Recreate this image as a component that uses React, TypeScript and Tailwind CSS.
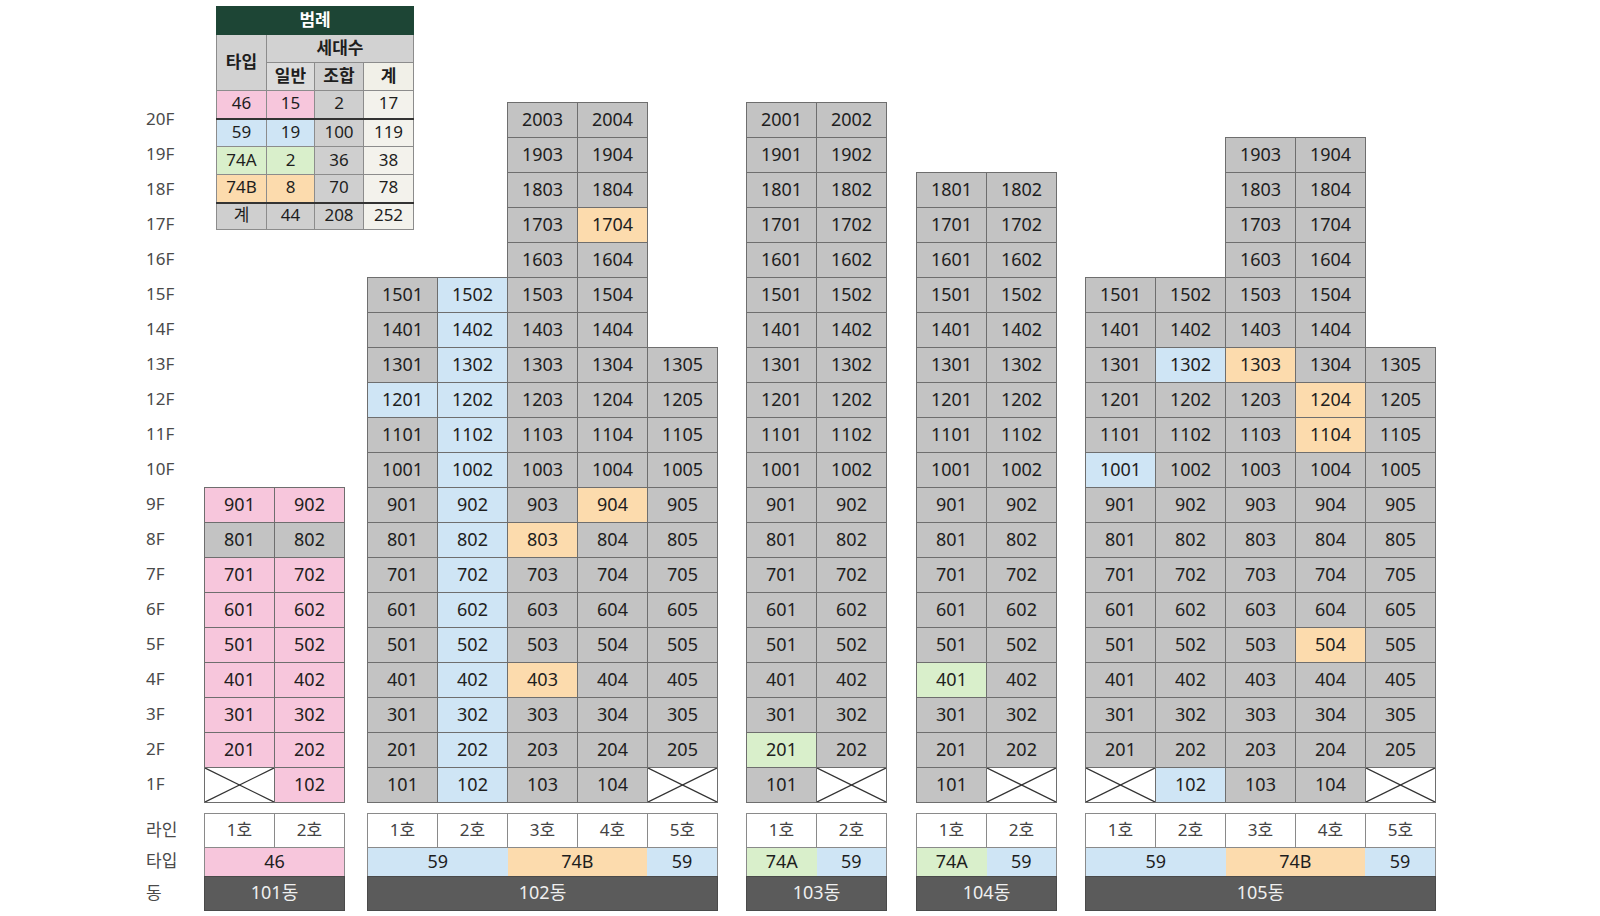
import React from 'react';

const tones = {
  gray: 'bg-[#c3c3c3]',
  pink: 'bg-[#f7c6dc]',
  blue: 'bg-[#cfe5f5]',
  green: 'bg-[#d9efcb]',
  orange: 'bg-[#fcdbad]',
};

type Tone = keyof typeof tones;

interface TypeSeg {
  label: string;
  span: 1 | 2;
  tone: Tone;
}

interface Building {
  name: string;
  tops: number[];
  base: Tone[];
  crossed: string[];
  marks: Record<string, Tone>;
  types: TypeSeg[];
  gap: string;
}

const buildings: Building[] = [
  {
    name: '101동',
    tops: [9, 9],
    base: ['pink', 'pink'],
    crossed: ['101'],
    marks: { '801': 'gray', '802': 'gray' },
    types: [{ label: '46', span: 2, tone: 'pink' }],
    gap: 'ml-0',
  },
  {
    name: '102동',
    tops: [15, 15, 20, 20, 13],
    base: ['gray', 'blue', 'gray', 'gray', 'gray'],
    crossed: ['105'],
    marks: { '1201': 'blue', '1704': 'orange', '904': 'orange', '803': 'orange', '403': 'orange' },
    types: [
      { label: '59', span: 2, tone: 'blue' },
      { label: '74B', span: 2, tone: 'orange' },
      { label: '59', span: 1, tone: 'blue' },
    ],
    gap: 'ml-[22px]',
  },
  {
    name: '103동',
    tops: [20, 20],
    base: ['gray', 'gray'],
    crossed: ['102'],
    marks: { '201': 'green' },
    types: [
      { label: '74A', span: 1, tone: 'green' },
      { label: '59', span: 1, tone: 'blue' },
    ],
    gap: 'ml-[28px]',
  },
  {
    name: '104동',
    tops: [18, 18],
    base: ['gray', 'gray'],
    crossed: ['102'],
    marks: { '401': 'green' },
    types: [
      { label: '74A', span: 1, tone: 'green' },
      { label: '59', span: 1, tone: 'blue' },
    ],
    gap: 'ml-[29px]',
  },
  {
    name: '105동',
    tops: [15, 15, 19, 19, 13],
    base: ['gray', 'gray', 'gray', 'gray', 'gray'],
    crossed: ['101', '105'],
    marks: {
      '1302': 'blue',
      '1303': 'orange',
      '1204': 'orange',
      '1104': 'orange',
      '1001': 'blue',
      '504': 'orange',
      '102': 'blue',
    },
    types: [
      { label: '59', span: 2, tone: 'blue' },
      { label: '74B', span: 2, tone: 'orange' },
      { label: '59', span: 1, tone: 'blue' },
    ],
    gap: 'ml-[28px]',
  },
];

const floors = Array.from({ length: 20 }, (_, i) => 20 - i);

const spanClass = { 1: 'flex-[1]', 2: 'flex-[2]' };

function Cross() {
  return (
    <svg className="block w-full h-full" viewBox="0 0 100 100" preserveAspectRatio="none">
      <line x1="0" y1="0" x2="100" y2="100" stroke="#333" strokeWidth="1.3" vectorEffect="non-scaling-stroke" />
      <line x1="0" y1="100" x2="100" y2="0" stroke="#333" strokeWidth="1.3" vectorEffect="non-scaling-stroke" />
    </svg>
  );
}

function Tower({ b }: { b: Building }) {
  return (
    <div className="flex items-end">
      {b.tops.map((top, i) => {
        const line = i + 1;
        const list = Array.from({ length: top }, (_, k) => top - k);
        return (
          <div key={line} className={`flex flex-col ${i > 0 ? '-ml-px' : ''}`}>
            {list.map((floor, k) => {
              const no = `${floor * 100 + line}`;
              const crossed = b.crossed.includes(no);
              const tone = b.marks[no] ?? b.base[i];
              return (
                <div
                  key={no}
                  className={`w-[71px] h-[36px] shrink-0 border border-[#6e6e6e] flex items-center justify-center text-[18px] leading-none text-[#1e1e1e] ${
                    k > 0 ? '-mt-px' : ''
                  } ${crossed ? 'bg-white' : `${tones[tone]} pb-[2px]`}`}
                >
                  {crossed ? <Cross /> : no}
                </div>
              );
            })}
          </div>
        );
      })}
    </div>
  );
}

function Labels({ b }: { b: Building }) {
  return (
    <div className="mt-[10px] flex flex-col">
      <div className="flex">
        {b.tops.map((_, i) => (
          <div
            key={i}
            className={`w-[71px] h-[35px] border border-[#8a8a8a] bg-white flex items-center justify-center pb-[3px] text-[17px] leading-none text-[#444] ${
              i > 0 ? '-ml-px' : ''
            }`}
          >
            {i + 1}호
          </div>
        ))}
      </div>
      <div className="flex h-[28px] border-x border-[#8a8a8a]">
        {b.types.map((t, i) => (
          <div
            key={i}
            className={`${spanClass[t.span]} ${tones[t.tone]} flex items-center justify-center pb-[3px] text-[18px] leading-none text-[#1e1e1e]`}
          >
            {t.label}
          </div>
        ))}
      </div>
      <div className="h-[35px] bg-[#5b5b5b] border border-[#4a4a4a] flex items-center justify-center pb-[3px] text-[18px] leading-none text-[#efefef]">
        {b.name}
      </div>
    </div>
  );
}

const td = 'border border-[#8c8c8c] text-center p-0 pb-[3px] text-[17px] leading-none text-[#1e1e1e]';

function Legend() {
  return (
    <table className="ml-[12px] w-[198px] border-collapse table-fixed shrink-0">
      <colgroup>
        <col className="w-[50px]" />
        <col className="w-[48px]" />
        <col className="w-[49px]" />
        <col className="w-[50px]" />
      </colgroup>
      <tbody>
        <tr className="h-[28px]">
          <td colSpan={4} className="bg-[#1d4535] border border-[#1d4535] text-center pb-[3px] text-[17px] leading-none font-bold text-white">
            범례
          </td>
        </tr>
        <tr className="h-[28px]">
          <td rowSpan={2} className={`${td} bg-[#d2d2d2] font-semibold`}>
            타입
          </td>
          <td colSpan={3} className={`${td} bg-[#d2d2d2] font-semibold`}>
            세대수
          </td>
        </tr>
        <tr className="h-[28px]">
          <td className={`${td} bg-[#dcdcdc] font-semibold`}>일반</td>
          <td className={`${td} bg-[#cfcfcf] font-semibold`}>조합</td>
          <td className={`${td} bg-[#f1f0e8] font-semibold`}>계</td>
        </tr>
        {[
          ['46', '15', '2', '17', 'bg-[#f7c6dc]', ''],
          ['59', '19', '100', '119', 'bg-[#cfe5f5]', 'border-t-2 border-t-[#333]'],
          ['74A', '2', '36', '38', 'bg-[#d9efcb]', ''],
          ['74B', '8', '70', '78', 'bg-[#fcdbad]', ''],
        ].map(([a, b, c, d, bg, top]) => (
          <tr key={a} className="h-[28px]">
            <td className={`${td} ${bg} ${top}`}>{a}</td>
            <td className={`${td} ${bg} ${top}`}>{b}</td>
            <td className={`${td} bg-[#cfcfcf] ${top}`}>{c}</td>
            <td className={`${td} bg-[#f3f2ec] ${top}`}>{d}</td>
          </tr>
        ))}
        <tr className="h-[27px]">
          <td className={`${td} bg-[#cfcfcf] border-t-2 border-t-[#333]`}>계</td>
          <td className={`${td} bg-[#cfcfcf] border-t-2 border-t-[#333]`}>44</td>
          <td className={`${td} bg-[#cfcfcf] border-t-2 border-t-[#333]`}>208</td>
          <td className={`${td} bg-[#f3f2ec] border-t-2 border-t-[#333]`}>252</td>
        </tr>
      </tbody>
    </table>
  );
}

export default function App() {
  return (
    <div
      className="w-[1600px] h-[916px] bg-white flex items-end pt-[6px] pb-[5px] pl-[146px] overflow-hidden"
      style={{ fontFamily: '"Noto Sans", "Noto Sans CJK KR", sans-serif' }}
    >
      <div className="w-[58px] shrink-0 flex flex-col text-[17px] leading-none text-[#4a4a4a]">
        {floors.map((f) => (
          <div key={f} className="h-[35px] flex items-center pb-[3px]">
            {f}F
          </div>
        ))}
        <div className="h-[11px]" />
        <div className="h-[35px] flex items-center pb-[3px]">라인</div>
        <div className="h-[28px] flex items-center pb-[3px]">타입</div>
        <div className="h-[35px] flex items-center pb-[3px]">동</div>
      </div>

      {buildings.map((b, idx) =>
        idx === 0 ? (
          <div key={b.name} className="w-[141px] shrink-0 self-stretch flex flex-col justify-between">
            <Legend />
            <div>
              <Tower b={b} />
              <Labels b={b} />
            </div>
          </div>
        ) : (
          <div key={b.name} className={`${b.gap} shrink-0 flex flex-col`}>
            <Tower b={b} />
            <Labels b={b} />
          </div>
        )
      )}
    </div>
  );
}
